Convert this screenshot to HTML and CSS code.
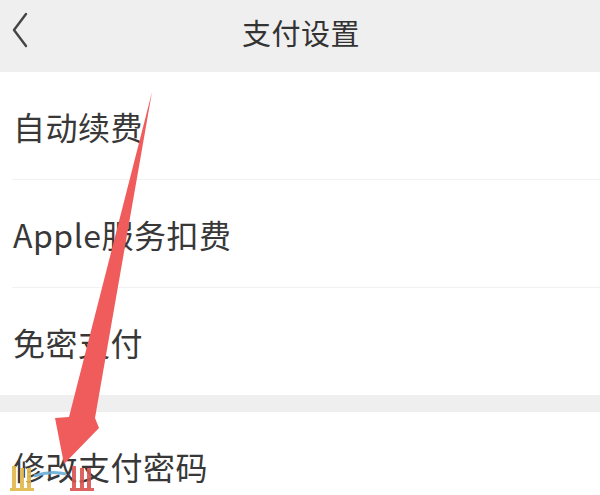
FILE: index.html
```html
<!DOCTYPE html>
<html lang="zh-CN">
<head>
  <meta charset="UTF-8">
  <meta name="viewport" content="width=device-width, initial-scale=1.0">
  <title>支付设置</title>
  <link rel="stylesheet" href="styles.css">
</head>
<body>
  <div class="page">
    <div class="header">
      <span class="back">
        <svg width="18" height="36" viewBox="0 0 18 36"><path d="M15 2 L3 18 L15 34" fill="none" stroke="#444" stroke-width="2.4" stroke-linecap="round" stroke-linejoin="round"/></svg>
      </span>
      <h1>支付设置</h1>
    </div>

    <div class="group">
      <div class="item">自动续费</div>
      <div class="item">Apple服务扣费</div>
      <div class="item">免密支付</div>
    </div>

    <div class="gap"></div>

    <div class="group">
      <div class="item">修改支付密码</div>
    </div>

    <!-- annotation arrow -->
    <svg class="arrow" width="600" height="495" viewBox="0 0 600 495">
      <polygon points="152,92 95,418 99,428 64,464 55,418 69,417" fill="#f05c5c"/>
    </svg>

    <!-- watermark -->
    <svg class="mark" width="100" height="36" viewBox="0 0 100 36">
      <rect x="12" y="8" width="4" height="24" fill="#e2b84a"/>
      <rect x="20" y="10" width="4" height="22" fill="#e2b84a"/>
      <rect x="27" y="10" width="4" height="22" fill="#e2b84a"/>
      <rect x="10" y="30" width="24" height="3" fill="#e2b84a"/>
      <path d="M34 18 Q50 12 66 16" fill="none" stroke="#6aaed6" stroke-width="3"/>
      <rect x="72" y="8" width="4" height="24" fill="#d9534f"/>
      <rect x="80" y="10" width="4" height="22" fill="#d9534f"/>
      <rect x="87" y="10" width="4" height="22" fill="#d9534f"/>
      <rect x="70" y="30" width="24" height="3" fill="#d9534f"/>
    </svg>
  </div>
</body>
</html>
```

FILE: styles.css
```css
body {
  margin: 0;
  padding: 0;
  font-family: "Noto Sans CJK SC", "Noto Sans", sans-serif;
  background: #fff;
  color: #383838;
}
.page {
  position: relative;
  width: 600px;
  height: 495px;
  overflow: hidden;
}
.header {
  height: 72px;
  background: #efefef;
  display: flex;
  align-items: center;
  justify-content: center;
  position: relative;
}
.header h1 {
  margin: 0 0 8px;
  font-size: 29px;
  font-weight: 400;
  color: #333;
  letter-spacing: 0.5px;
  padding-left: 2px;
}
.back {
  position: absolute;
  left: 11px;
  top: 12px;
  display: flex;
}
.item {
  height: 107px;
  display: flex;
  align-items: center;
  margin-left: 12px;
  padding-left: 1px;
  font-size: 32px;
  letter-spacing: 0.5px;
  border-bottom: 1px solid #f1f1f1;
}
.group .item:last-child {
  border-bottom: none;
}
.gap {
  height: 17px;
  background: #efefef;
}
.arrow {
  position: absolute;
  left: 0;
  top: 0;
}
.mark {
  position: absolute;
  left: 0;
  top: 458px;
  opacity: 0.9;
}
```
